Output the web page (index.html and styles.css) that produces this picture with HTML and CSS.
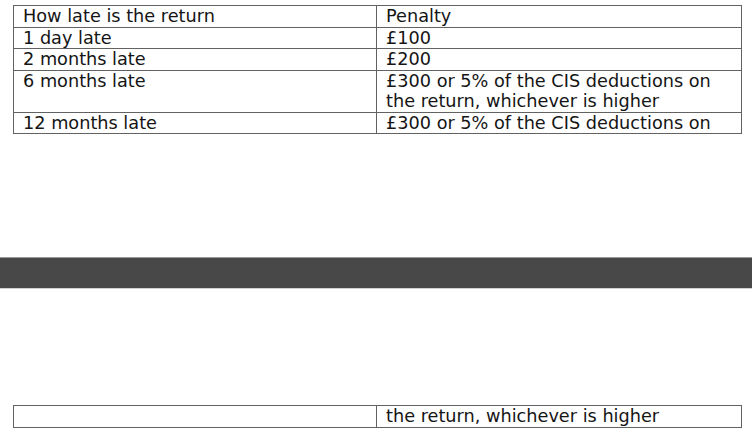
FILE: index.html
```html
<!DOCTYPE html>
<html>
<head>
<meta charset="utf-8">
<link rel="stylesheet" href="styles.css">
</head>
<body>
<div class="page page-top">
  <table class="penalties">
    <colgroup><col class="c1"><col class="c2"></colgroup>
    <tr><td>How late is the return</td><td>Penalty</td></tr>
    <tr><td>1 day late</td><td>£100</td></tr>
    <tr><td>2 months late</td><td>£200</td></tr>
    <tr><td>6 months late</td><td>£300 or 5% of the CIS deductions on the return, whichever is higher</td></tr>
    <tr><td>12 months late</td><td>£300 or 5% of the CIS deductions on</td></tr>
  </table>
</div>
<div class="break"></div>
<div class="page page-bottom">
  <table class="penalties">
    <colgroup><col class="c1"><col class="c2"></colgroup>
    <tr><td></td><td>the return, whichever is higher</td></tr>
  </table>
</div>
</body>
</html>
```
FILE: styles.css
```css
html, body {
  margin: 0;
  padding: 0;
  background: #ffffff;
}
body {
  font-family: "DejaVu Sans", sans-serif;
  font-size: 17.7px;
  color: #151515;
  width: 752px;
  height: 430px;
  overflow: hidden;
}
.page {
  padding-left: 13px;
}
.page-top {
  padding-top: 5px;
  height: 257px;
  box-sizing: border-box;
}
.page-bottom {
  padding-top: 116px;
}
.break {
  height: 30px;
  background: #484848;
  border-top: 1px solid #9a9a9a;
  border-bottom: 1px solid #d0d0d0;
}
.penalties {
  border-collapse: collapse;
  width: 728px;
  table-layout: fixed;
}
.penalties td {
  border: 1px solid #626262;
  padding: 0 4px 0 9px;
  line-height: 20.5px;
  height: 20.5px;
  vertical-align: top;
}
.c1 {
  width: 363px;
}
.c2 {
  width: 365px;
}
```
